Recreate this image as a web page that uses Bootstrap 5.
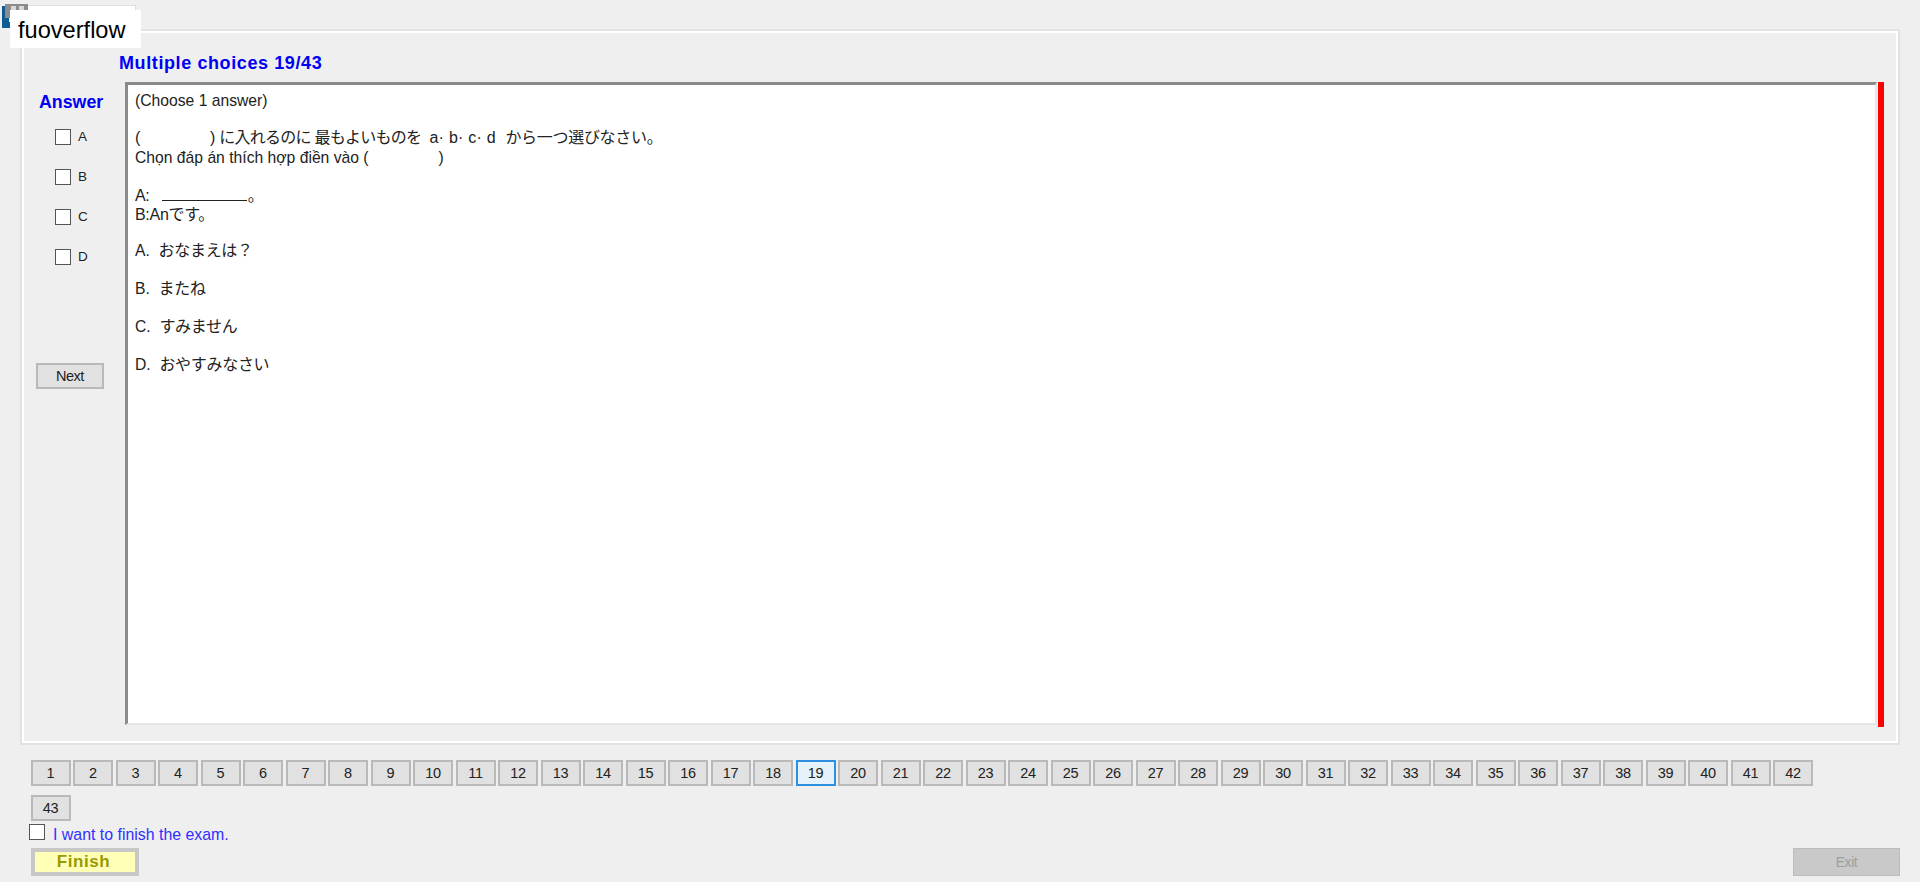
<!DOCTYPE html>
<html lang="en">
<head>
<meta charset="utf-8">
<title>Exam</title>
<link href="https://cdn.jsdelivr.net/npm/bootstrap@5.3.0/dist/css/bootstrap.min.css" rel="stylesheet">
<style>
html,body{height:100%;}
body{background:#efefef;color:#222;font-family:"Liberation Sans","Noto Sans CJK JP",sans-serif;font-size:15.7px;overflow:hidden;position:relative;}
.shell{height:882px;padding:29px 20px 0 20px;}
.frame{height:716px;border:2px solid #e2e2e2;outline:2px solid #fff;outline-offset:-4px;padding:0;}
.frame-inner{height:100%;padding:22px 14px 0 0;}
.title-line{margin:0 0 9px 97px;color:#0000f5;font-weight:700;font-size:18px;letter-spacing:.6px;line-height:20px;height:20px;}
.side{width:103px;flex:none;}
.answer-head{color:#0000f5;font-weight:700;font-size:17.8px;margin:8px 0 0 17px;line-height:24px;}
.opt-list{margin:15px 0 0 33px;}
.opt-row{height:40px;display:flex;align-items:flex-start;gap:7px;font-size:13.5px;line-height:15px;margin:0;}
.opt-row .form-check-input,.finish-row .form-check-input{width:16px;height:16px;margin:0;border:1.5px solid #555;border-radius:0;background-color:#fff;flex:none;}
.win-btn{background:#e1e1e1;border:2px solid #b9b9b9;color:#222;border-radius:0;padding:0;font-size:14.5px;letter-spacing:-.2px;line-height:22px;height:26px;}
.next-btn{width:68px;margin:74px 0 0 14px;display:block;letter-spacing:-.5px;}
.question{height:643px;flex:1;min-width:0;background:#fff;border-top:3px solid #8a8a8a;border-left:3px solid #8a8a8a;border-right:2px solid #e6e6e6;border-bottom:2px solid #e6e6e6;padding:6px 7px;line-height:19px;}
.question p{margin:0;}
.q-a{margin-top:18px!important;}
.q-b{margin-top:18px!important;}
.q-n{margin-top:-1px!important;}
.q-c{margin-top:18px!important;line-height:20px;}
.q-e{margin-top:16px!important;line-height:20px;}
.q-d{font-size:16px;line-height:20px;letter-spacing:-.3px;}
.q-t{letter-spacing:-.75px;}
.q-l{letter-spacing:.25px;}
.rule-gap{display:inline-block;width:85px;border-bottom:1.5px solid #222;height:16px;margin:0 1px 0 8px;}
.blank{display:inline-block;width:70px;}
.red-bar{width:6px;height:645px;background:#f00;margin-left:1px;flex:none;}
.q-nums{margin:15px 0 0 10.5px;width:1800px;gap:9px 2.5px;}
.q-nums .win-btn{width:40px;}
.q-nums .cur{background:#e5f1fb;border-color:#2f8fe0;}
.finish-row{margin:3px 0 0 9px;height:20px;color:#2f2fff;font-size:15.9px;gap:8px;}
.finish-row label{padding-top:1px;line-height:20px;}
.foot{margin:4px 0 0 11px;}
.finish-btn{width:108px;height:28px;background:#ffffb8;border:4px solid #c8c8c8;color:#9a9a00;font-weight:700;font-size:17px;line-height:18px;padding:0 3px 0 0;border-radius:0;letter-spacing:.6px;}
.exit-btn:disabled{width:107px;height:28px;background:#c9c9c9;border:1px solid #bdbdbd;color:#9e9e9e;font-size:14px;padding:0;border-radius:0;letter-spacing:-.4px;opacity:1;}
.tab-back{position:absolute;left:27px;top:5px;width:109px;height:28px;background:#fff;border:1px solid #e0e0e0;}
.app-icon{position:absolute;left:2px;top:4px;width:26px;height:24px;}
.brand{position:absolute;left:10px;top:10px;width:131px;height:38px;background:#fff;color:#000;font-size:23.6px;line-height:41px;padding-left:8px;}
</style>
</head>
<body>
<div class="tab-back"></div>
<svg class="app-icon" viewBox="0 0 26 24" aria-hidden="true">
  <rect x="0" y="2" width="7" height="22" fill="#0e5c96"/>
  <rect x="0" y="18" width="14" height="6" fill="#0e5c96"/>
  <rect x="3" y="0" width="23" height="14" fill="#8c8c8c"/>
  <rect x="9" y="2" width="5" height="8" fill="#d8d8d8"/>
  <rect x="17" y="2" width="5" height="8" fill="#d8d8d8"/>
</svg>
<div class="brand">fuoverflow</div>
<div class="shell d-flex flex-column">
  <div class="frame">
    <div class="frame-inner">
      <div class="title-line">Multiple choices 19/43</div>
      <div class="d-flex align-items-start">
        <div class="side">
          <div class="answer-head">Answer</div>
          <div class="opt-list">
            <div class="opt-row"><input class="form-check-input" type="checkbox" id="a"><label for="a">A</label></div>
            <div class="opt-row"><input class="form-check-input" type="checkbox" id="b"><label for="b">B</label></div>
            <div class="opt-row"><input class="form-check-input" type="checkbox" id="c"><label for="c">C</label></div>
            <div class="opt-row"><input class="form-check-input" type="checkbox" id="d"><label for="d">D</label></div>
          </div>
          <button class="btn win-btn next-btn" type="button">Next</button>
        </div>
        <div class="question">
          <p>(Choose 1 answer)</p>
          <p class="q-a"><span class="q-d">(<span class="blank"></span>) <span class="q-t">に入れるのに 最もよいものを</span> &nbsp;<span class="q-l">a· b· c· d &nbsp;</span>から一つ選びなさい。</span></p>
          <p>Chọn đáp án thích hợp điền vào (<span class="blank"></span>)</p>
          <p class="q-b"><span class="q-d">A: <span class="rule-gap"></span>。</span></p>
          <p class="q-n"><span class="q-d">B:Anです。</span></p>
          <p class="q-e">A. &nbsp;<span class="q-d">おなまえは？</span></p>
          <p class="q-c">B. &nbsp;<span class="q-d">またね</span></p>
          <p class="q-c">C. &nbsp;<span class="q-d">すみません</span></p>
          <p class="q-c">D. &nbsp;<span class="q-d">おやすみなさい</span></p>
        </div>
        <div class="red-bar"></div>
      </div>
    </div>
  </div>
  <div class="q-nums d-flex flex-wrap">
    <button class="btn win-btn" type="button">1</button><button class="btn win-btn" type="button">2</button><button class="btn win-btn" type="button">3</button><button class="btn win-btn" type="button">4</button><button class="btn win-btn" type="button">5</button><button class="btn win-btn" type="button">6</button><button class="btn win-btn" type="button">7</button><button class="btn win-btn" type="button">8</button><button class="btn win-btn" type="button">9</button><button class="btn win-btn" type="button">10</button><button class="btn win-btn" type="button">11</button><button class="btn win-btn" type="button">12</button><button class="btn win-btn" type="button">13</button><button class="btn win-btn" type="button">14</button><button class="btn win-btn" type="button">15</button><button class="btn win-btn" type="button">16</button><button class="btn win-btn" type="button">17</button><button class="btn win-btn" type="button">18</button><button class="btn win-btn cur" type="button">19</button><button class="btn win-btn" type="button">20</button><button class="btn win-btn" type="button">21</button><button class="btn win-btn" type="button">22</button><button class="btn win-btn" type="button">23</button><button class="btn win-btn" type="button">24</button><button class="btn win-btn" type="button">25</button><button class="btn win-btn" type="button">26</button><button class="btn win-btn" type="button">27</button><button class="btn win-btn" type="button">28</button><button class="btn win-btn" type="button">29</button><button class="btn win-btn" type="button">30</button><button class="btn win-btn" type="button">31</button><button class="btn win-btn" type="button">32</button><button class="btn win-btn" type="button">33</button><button class="btn win-btn" type="button">34</button><button class="btn win-btn" type="button">35</button><button class="btn win-btn" type="button">36</button><button class="btn win-btn" type="button">37</button><button class="btn win-btn" type="button">38</button><button class="btn win-btn" type="button">39</button><button class="btn win-btn" type="button">40</button><button class="btn win-btn" type="button">41</button><button class="btn win-btn" type="button">42</button><button class="btn win-btn" type="button">43</button>
  </div>
  <div class="finish-row d-flex">
    <input class="form-check-input" type="checkbox" id="fin"><label for="fin">I want to finish the exam.</label>
  </div>
  <div class="foot d-flex justify-content-between">
    <button class="btn finish-btn" type="button">Finish</button>
    <button class="btn exit-btn" type="button" disabled>Exit</button>
  </div>
</div>
<script src="https://cdn.jsdelivr.net/npm/bootstrap@5.3.0/dist/js/bootstrap.bundle.min.js"></script>
</body>
</html>
